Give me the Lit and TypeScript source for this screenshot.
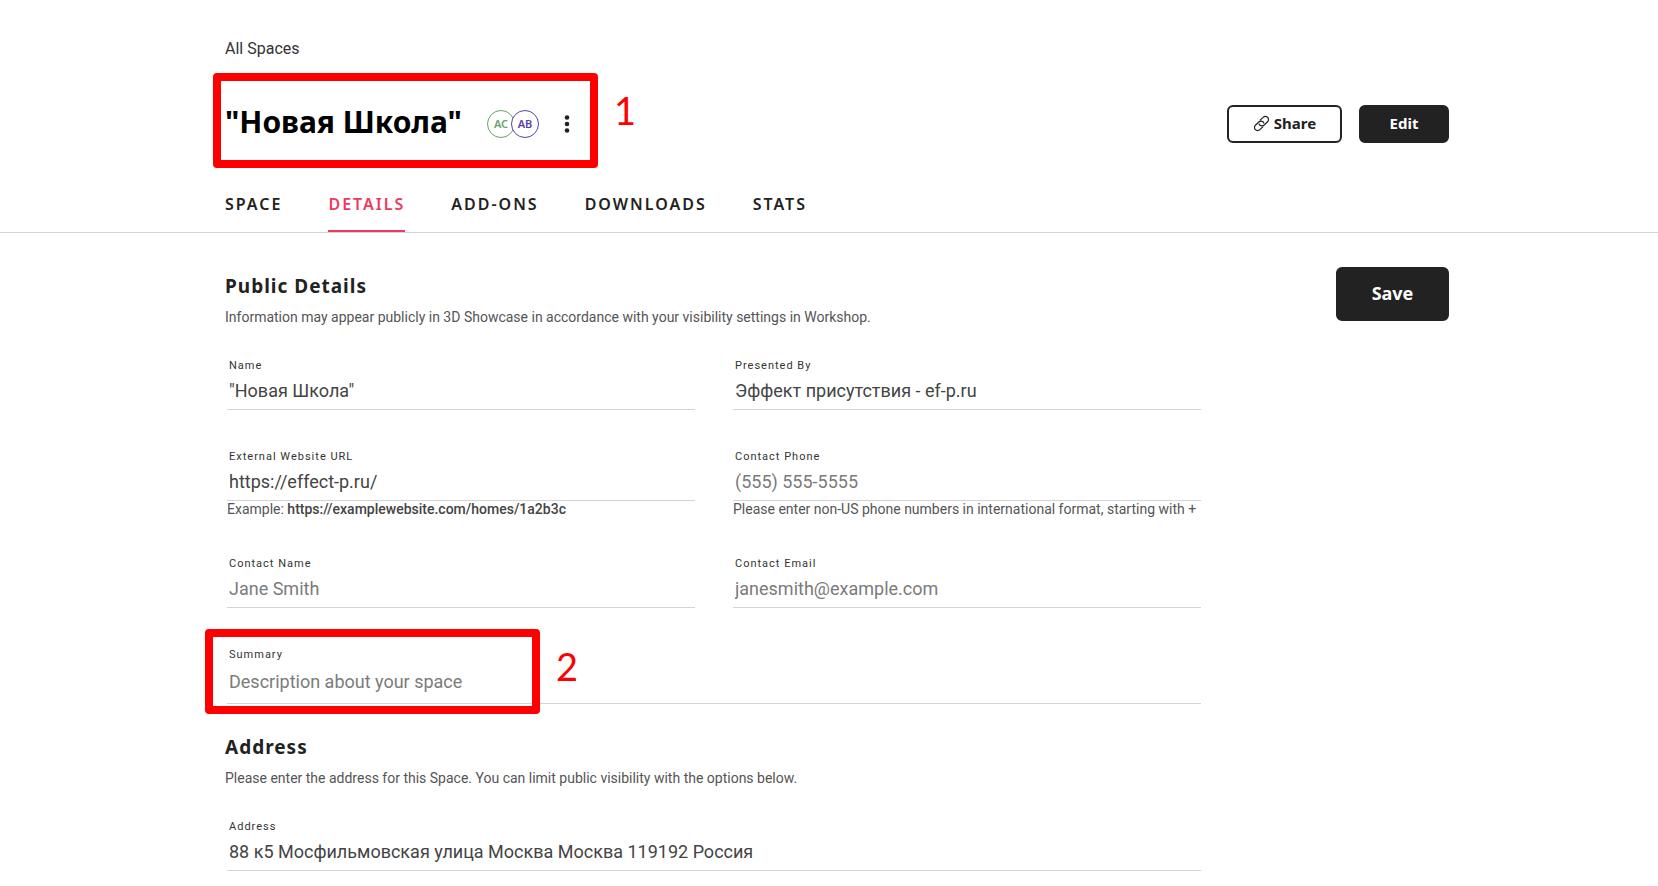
import { LitElement, html, css, nothing } from "lit";
import { customElement, property } from "lit/decorators.js";

@customElement("text-field")
class TextField extends LitElement {
  @property() label = "";
  @property() value = "";
  @property() placeholder = "";
  @property() type = "text";
  @property({ type: Boolean }) multiline = false;

  static styles = css`
    :host {
      display: block;
    }
    .label {
      display: block;
      padding-left: 2px;
      font: 400 11px/16px Roboto, sans-serif;
      letter-spacing: 1px;
      color: #333;
    }
    .control {
      display: block;
      box-sizing: border-box;
      width: 100%;
      height: 36px;
      margin: 0;
      padding: 2px 2px 4px;
      border: 0;
      border-bottom: 1px solid #d3d3d3;
      border-radius: 0;
      outline: 0;
      background: none;
      color: #444;
      font: 400 18px/26px Roboto, sans-serif;
      resize: none;
      overflow: hidden;
    }
    .area {
      height: 41px;
      padding-top: 6px;
    }
    .control::placeholder {
      color: #7b7b7b;
      opacity: 1;
    }
  `;

  render() {
    return html`
      <label class="label" for="control">${this.label}</label>
      ${this.multiline
        ? html`<textarea
            id="control"
            class="control area"
            rows="1"
            placeholder=${this.placeholder}
            .value=${this.value}
          ></textarea>`
        : html`<input
            id="control"
            class="control"
            type=${this.type}
            placeholder=${this.placeholder || nothing}
            .value=${this.value}
          />`}
      <slot></slot>
    `;
  }
}

@customElement("app-root")
class AppRoot extends LitElement {
  static styles = css`
    :host {
      display: block;
      height: 100vh;
      overflow: hidden;
      background: #fff;
      color: #222;
      font-family: Roboto, sans-serif;
    }
    .container {
      box-sizing: border-box;
      max-width: 1240px;
      margin: 0 auto;
      padding-left: 16px;
    }
    .header {
      padding-top: 39px;
      border-bottom: 1px solid #d3d3d3;
    }
    .back {
      display: inline-block;
      font-size: 16px;
      line-height: 20px;
      color: #333;
      text-decoration: none;
    }
    .title-row {
      display: flex;
      align-items: center;
      justify-content: space-between;
      height: 38px;
      margin-top: 46px;
    }
    .identity {
      position: relative;
      display: flex;
      align-items: center;
    }
    .title {
      margin: 0;
      padding-bottom: 4px;
      font: 700 30px/34px "Noto Sans", sans-serif;
      color: #000;
    }
    .people {
      display: flex;
      margin-left: 25px;
    }
    .person {
      box-sizing: border-box;
      width: 28px;
      height: 28px;
      border: 1px solid;
      border-radius: 50%;
      background: #fff;
      font: 600 11px/26px "Noto Sans", sans-serif;
      text-align: center;
    }
    .green {
      color: #67a46b;
    }
    .purple {
      margin-left: -4px;
      color: #5a3fa5;
    }
    .more {
      display: flex;
      margin-left: 16px;
      padding: 0;
      border: 0;
      background: none;
    }
    .actions {
      display: flex;
      gap: 17px;
    }
    .button {
      display: flex;
      align-items: center;
      justify-content: center;
      gap: 4px;
      box-sizing: border-box;
      height: 38px;
      min-width: 90px;
      padding: 0 22px 2px;
      border: 2px solid #222;
      border-radius: 6px;
      background: #222;
      color: #fff;
      font: 700 15px/20px "Noto Sans", sans-serif;
    }
    .outline {
      min-width: 115px;
      background: #fff;
      color: #222;
    }
    .save {
      height: 54px;
      min-width: 113px;
      font-size: 18px;
    }
    .tabs {
      display: flex;
      gap: 46px;
      margin-top: 49px;
    }
    .tab {
      box-sizing: border-box;
      height: 40px;
      font: 600 16px/24px "Noto Sans", sans-serif;
      letter-spacing: 2px;
      color: #222;
      text-decoration: none;
    }
    .active {
      border-bottom: 2px solid #ed3a5e;
      color: #ed3a5e;
    }
    .main {
      display: flex;
      align-items: flex-start;
      justify-content: space-between;
      gap: 135px;
      padding-top: 34px;
    }
    .form {
      flex: 1;
      padding-top: 5px;
    }
    .section {
      margin: 0 0 29px;
    }
    .heading {
      margin: 0 0 7px;
      font: 700 19px/28px "Noto Sans", sans-serif;
      letter-spacing: 1px;
    }
    .intro {
      margin: 0 0 31px;
      font-size: 14px;
      line-height: 20px;
      color: #555;
    }
    .fields {
      display: grid;
      grid-template-columns: 1fr 1fr;
      gap: 39px 38px;
      padding-left: 2px;
    }
    .wide {
      grid-column: 1 / -1;
    }
    .hint {
      display: block;
      font-size: 14px;
      line-height: 16px;
      color: #555;
    }
    .strong {
      font-weight: 500;
      color: #444;
    }
    .marked {
      position: relative;
    }
    .mark {
      position: absolute;
      box-sizing: border-box;
      border: 8px solid #f00;
      border-radius: 4px;
      pointer-events: none;
    }
    .mark-title {
      inset: -32px -19px -25px -12px;
    }
    .mark-summary {
      inset: -18px auto -10px -22px;
      width: 335px;
    }
    .number {
      position: absolute;
      left: 100%;
      top: 9px;
      margin-left: 24px;
      font: 400 38px/40px Lato, sans-serif;
      color: #f00;
    }
  `;

  render() {
    return html`
      <header class="header">
        <div class="container">
          <a class="back" href="#">All Spaces</a>
          <div class="title-row">
            <div class="identity">
              <h1 class="title">"Новая Школа"</h1>
              <div class="people">
                <span class="person green">AC</span>
                <span class="person purple">AB</span>
              </div>
              <button class="more" aria-label="More options">
                <svg width="24" height="24" viewBox="0 0 24 24" fill="#222">
                  <circle cx="12" cy="5.5" r="2.3" />
                  <circle cx="12" cy="12" r="2.3" />
                  <circle cx="12" cy="18.5" r="2.3" />
                </svg>
              </button>
              <div class="mark mark-title"><span class="number">1</span></div>
            </div>
            <div class="actions">
              <button class="button outline">
                <svg width="17" height="17" viewBox="0 0 17 17" fill="none" stroke="#222" stroke-width="1.2" stroke-linecap="round">
                  <path d="M7.2 5.2 10.1 2.3a3.1 3.1 0 0 1 4.5 0 3.1 3.1 0 0 1 0 4.4L11.2 10a3.1 3.1 0 0 1-4.4 0 2.6 2.6 0 0 1-.6-1" />
                  <path d="M9.8 11.8 6.9 14.7a3.1 3.1 0 0 1-4.5 0 3.1 3.1 0 0 1 0-4.4L5.8 7a3.1 3.1 0 0 1 4.4 0 2.6 2.6 0 0 1 .6 1" />
                </svg>
                Share
              </button>
              <button class="button">Edit</button>
            </div>
          </div>
          <nav class="tabs">
            <a class="tab" href="#">SPACE</a>
            <a class="tab active" href="#" aria-current="page">DETAILS</a>
            <a class="tab" href="#">ADD-ONS</a>
            <a class="tab" href="#">DOWNLOADS</a>
            <a class="tab" href="#">STATS</a>
          </nav>
        </div>
      </header>
      <main class="container main">
        <form class="form">
          <section class="section">
            <h2 class="heading">Public Details</h2>
            <p class="intro">
              Information may appear publicly in 3D Showcase in accordance with your visibility settings in Workshop.
            </p>
            <div class="fields">
              <text-field label="Name" value='"Новая Школа"'></text-field>
              <text-field label="Presented By" value="Эффект присутствия - ef-p.ru"></text-field>
              <text-field label="External Website URL" value="https://effect-p.ru/">
                <span class="hint">Example: <b class="strong">https://examplewebsite.com/homes/1a2b3c</b></span>
              </text-field>
              <text-field label="Contact Phone" type="tel" placeholder="(555) 555-5555">
                <span class="hint">Please enter non-US phone numbers in international format, starting with +</span>
              </text-field>
              <text-field label="Contact Name" placeholder="Jane Smith"></text-field>
              <text-field label="Contact Email" type="email" placeholder="janesmith@example.com"></text-field>
              <div class="wide marked">
                <text-field label="Summary" multiline placeholder="Description about your space"></text-field>
                <div class="mark mark-summary"><span class="number">2</span></div>
              </div>
            </div>
          </section>
          <section class="section">
            <h2 class="heading">Address</h2>
            <p class="intro">
              Please enter the address for this Space. You can limit public visibility with the options below.
            </p>
            <div class="fields">
              <text-field
                class="wide"
                label="Address"
                value="88 к5 Мосфильмовская улица Москва Москва 119192 Россия"
              ></text-field>
            </div>
          </section>
        </form>
        <button class="button save">Save</button>
      </main>
    `;
  }
}
